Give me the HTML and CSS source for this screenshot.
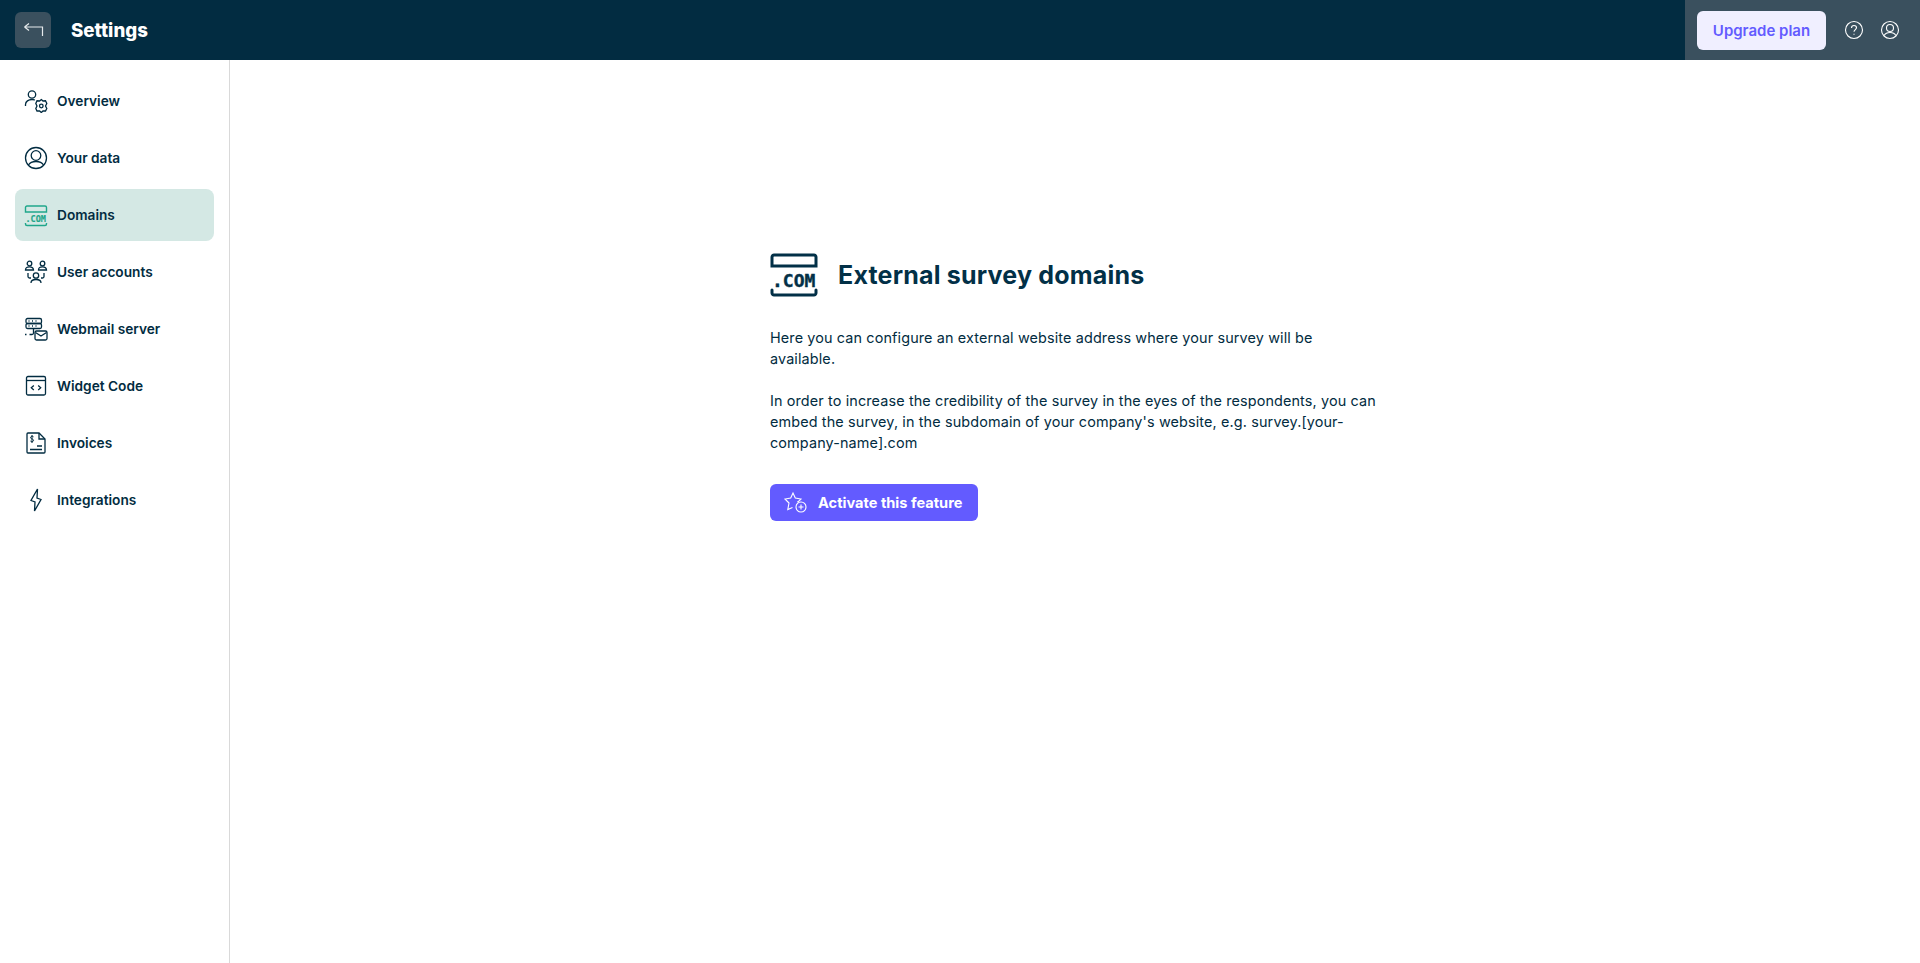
FILE: index.html
```html
<!DOCTYPE html>
<html lang="en">
<head>
<meta charset="utf-8">
<title>Settings</title>
<link rel="stylesheet" href="styles.css">
</head>
<body>
<header class="topbar">
  <div class="topbar-left">
    <button class="back-btn" aria-label="Back">
      <svg width="24" height="24" viewBox="0 0 24 24" fill="none" stroke="#e6eaec" stroke-width="1.2"><path d="M3.500 9H21.500V18M3.500 9L8 5.500M3.500 9L8 12.500"/></svg>
    </button>
    <span class="page-title">Settings</span>
  </div>
  <div class="topbar-right">
    <button class="upgrade-btn">Upgrade plan</button>
    <svg class="top-icon" width="20" height="20" viewBox="0 0 20 20" fill="none" stroke="#fff" stroke-width="1.100"><circle cx="10" cy="10" r="8.500"/><path d="M7.500 8C7.500 6.500 8.700 5.500 10 5.500C11.500 5.500 12.500 6.500 12.500 7.800C12.500 9.500 10 9.700 10 11.800"/><path d="M10 13.800V14.800"/></svg>
    <svg class="top-icon" width="20" height="20" viewBox="0 0 20 20" fill="none" stroke="#fff" stroke-width="1.100"><circle cx="10" cy="10" r="8.500"/><circle cx="10" cy="8" r="3.500"/><path d="M4.200 15.500C5.500 13 7.500 12.500 10 12.500C12.500 12.500 14.500 13 15.800 15.500"/></svg>
  </div>
</header>
<div class="shell">
  <nav class="sidebar">
    <a class="nav-item">
      <svg class="nav-icon" viewBox="0 0 24 24" fill="none" stroke="#022c41" stroke-width="1.300"><circle cx="8" cy="5.500" r="3.700"/><path d="M1.500 17V15.500C1.500 12.500 4.500 10.500 8 10.500C9 10.500 10 10.700 11 11"/><path d="M17.300 10.500L19 12L21.500 11.800L22.800 14.500L21.500 17L22.800 19.500L21.500 22L19 22L17.300 23.500L15.600 22L13 22L11.800 19.500L13 17L11.800 14.500L13 11.800L15.600 12Z"/><circle cx="17.300" cy="17" r="1.800"/></svg>
      <span>Overview</span>
    </a>
    <a class="nav-item">
      <svg class="nav-icon" viewBox="0 0 24 24" fill="none" stroke="#022c41" stroke-width="1.300"><circle cx="12" cy="12" r="10.500"/><circle cx="12" cy="9.500" r="4.800"/><path d="M4.500 19C6 16.300 8.500 15.500 12 15.500C15.500 15.500 18 16.300 19.500 19"/></svg>
      <span>Your data</span>
    </a>
    <a class="nav-item is-active">
      <svg class="nav-icon" viewBox="0 0 24 24" fill="none" stroke="#1fa68a" stroke-width="1.400"><path d="M1.500 9V4.500C1.500 3.700 2.200 3 3 3H21C21.800 3 22.500 3.700 22.500 4.500V9H1.500Z"/><path d="M1.500 20V21C1.500 21.800 2.200 22.500 3 22.500H21C21.800 22.500 22.500 21.800 22.500 21V20"/><text class="com-mark com-mark-small" x="1.500" y="18.500">.COM</text></svg>
      <span>Domains</span>
    </a>
    <a class="nav-item">
      <svg class="nav-icon" viewBox="0 0 24 24" fill="none" stroke="#022c41" stroke-width="1.300"><circle cx="5.500" cy="3.500" r="2.300"/><circle cx="18.500" cy="3.500" r="2.300"/><path d="M1.500 10C1.500 7.500 3 6.800 5.500 6.800C8 6.800 9.500 7.500 9.500 10H1.500Z"/><path d="M14.500 10C14.500 7.500 16 6.800 18.500 6.800C21 6.800 22.500 7.500 22.500 10H14.500Z"/><circle cx="12" cy="15.500" r="2.700"/><path d="M7 23C7 20.500 9 19.500 12 19.500C15 19.500 17 20.500 17 23"/><path d="M4 13V16.500C4 17.300 4.700 18 5.500 18H7M20 13V16.500C20 17.300 19.300 18 18.500 18H17"/></svg>
      <span>User accounts</span>
    </a>
    <a class="nav-item">
      <svg class="nav-icon" viewBox="0 0 24 24" fill="none" stroke="#022c41" stroke-width="1.300"><rect x="2" y="1.500" width="15.500" height="5" rx="1.500"/><rect x="2" y="6.500" width="15.500" height="5" rx="1.500"/><path d="M4.500 4H5.500M8 4H9M11.500 4H12.500M4.500 9H5.500M8 9H9M11.500 9H12.500"/><path d="M1 17.500H2.500M5.500 17.500H8C9 17.500 9.500 17 9.500 16V11.500"/><rect x="11" y="14" width="12" height="9" rx="1.500"/><path d="M11.500 15.500L17 19L22.500 15.500"/></svg>
      <span>Webmail server</span>
    </a>
    <a class="nav-item">
      <svg class="nav-icon" viewBox="0 0 24 24" fill="none" stroke="#022c41" stroke-width="1.300"><rect x="2.500" y="2.500" width="19" height="18.500" rx="1.500"/><path d="M2.500 6.500H21.500"/><path d="M9.800 11.500L7.300 13.800L9.800 16M14.200 11.500L16.700 13.800L14.200 16"/></svg>
      <span>Widget Code</span>
    </a>
    <a class="nav-item">
      <svg class="nav-icon" viewBox="0 0 24 24" fill="none" stroke="#022c41" stroke-width="1.300"><path d="M3 3C3 2.400 3.400 2 4 2H15L21 8V21C21 21.600 20.600 22 20 22H4C3.400 22 3 21.600 3 21Z"/><path d="M15 2V8H21"/><path d="M13 15H18M6 18.500H18"/><path d="M9.500 5.800C9 5 7.200 5 6.700 6C6.200 7.200 7.200 7.700 8 7.900C9 8.200 9.800 8.700 9.400 9.900C9 11 7 11 6.400 10M8 4V12" stroke-width="1"/></svg>
      <span>Invoices</span>
    </a>
    <a class="nav-item">
      <svg class="nav-icon" viewBox="0 0 24 24" fill="none" stroke="#022c41" stroke-width="1.300"><path d="M13.500 1L7 12.500L11 14L10.500 23L17 11.500L13 10Z"/></svg>
      <span>Integrations</span>
    </a>
  </nav>
  <main class="content">
    <section class="panel">
      <div class="panel-head">
        <svg class="panel-icon" viewBox="0 0 48 44" fill="none" stroke="#023047" stroke-width="3" stroke-linecap="round"><path d="M2 13V4C2 3 3 2 4 2H44C45 2 46 3 46 4V13H2Z"/><path d="M2 37V40C2 41 3 42 4 42H44C45 42 46 41 46 40V37"/><text class="com-mark" x="2" y="34">.COM</text></svg>
        <h1 class="panel-title">External survey domains</h1>
      </div>
      <p class="panel-text">Here you can configure an external website address where your survey will be<br>available.</p>
      <p class="panel-text">In order to increase the credibility of the survey in the eyes of the respondents, you can<br>embed the survey, in the subdomain of your company's website, e.g. survey.[your-<br>company-name].com</p>
      <button class="activate-btn">
        <svg class="activate-icon" width="24" height="24" viewBox="0 0 24 24" fill="none" stroke="#fff" stroke-width="1.100"><path d="M14.500 10.300L15 11L18 8L12.300 7L10 2L7.700 7L2 8L6 12L4.800 18.500L9.500 16.500"/><circle cx="18" cy="16" r="5"/><path d="M18 13.500V18.500M15.500 16H20.500"/></svg>
        <span>Activate this feature</span>
      </button>
    </section>
  </main>
</div>
</body>
</html>
```
FILE: styles.css
```css
* { box-sizing: border-box; }
html, body { height: 100%; }
body {
  margin: 0;
  font-family: Inter, "Open Sans", "Liberation Sans", sans-serif;
  color: #022c41;
  background: #fff;
  display: flex;
  flex-direction: column;
  overflow: hidden;
}
button { font-family: inherit; border: 0; cursor: pointer; }
.topbar {
  height: 60px;
  flex: none;
  display: flex;
  justify-content: space-between;
  background: #022c41;
}
.topbar-left {
  display: flex;
  align-items: center;
  padding-left: 15px;
  gap: 20px;
}
.back-btn {
  width: 36px;
  height: 36px;
  padding: 0;
  border-radius: 6px;
  background: #3a505e;
  display: flex;
  align-items: center;
  justify-content: center;
}
.page-title { color: #fff; font-size: 18.700px; font-weight: 800; }
.topbar-right {
  width: 235px;
  background: #3a505e;
  display: flex;
  align-items: center;
  padding-left: 12px;
}
.upgrade-btn {
  width: 129px;
  height: 39px;
  padding: 0;
  margin-right: 18px;
  border-radius: 6px;
  background: #f0efff;
  color: #635bff;
  font-size: 15px;
  font-weight: 600;
}
.top-icon { margin-right: 16px; flex: none; }
.shell { flex: 1; display: flex; min-height: 0; }
.sidebar {
  width: 230px;
  flex: none;
  border-right: 1px solid #d9d9d9;
  padding: 15px 15px 0;
  display: flex;
  flex-direction: column;
  gap: 5px;
}
.nav-item {
  height: 52px;
  display: flex;
  align-items: center;
  gap: 9px;
  padding-left: 9px;
  padding-bottom: 1px;
  border-radius: 8px;
  font-size: 13.700px;
  font-weight: 600;
  color: #022c41;
}
.nav-item.is-active { background: #d4e8e4; }
.nav-icon { width: 24px; height: 24px; flex: none; }
.com-mark {
  font-family: "DejaVu Sans Mono", monospace;
  font-weight: 700;
  font-size: 18px;
  fill: #023047;
  stroke: #023047;
  stroke-width: 0.4px;
}
.com-mark-small { font-size: 8.500px; fill: #1fa68a; stroke: #1fa68a; stroke-width: 0.15px; }
.content { flex: 1; padding: 192px 0 0 540px; }
.panel { width: 610px; }
.panel-head { display: flex; align-items: center; gap: 20px; margin-bottom: 29px; }
.panel-icon { width: 48px; height: 44px; flex: none; }
.panel-title { margin: 0; font-size: 25px; font-weight: 700; line-height: 46px; color: #023047; letter-spacing: 0.2px; }
.panel-text {
  margin: 0 0 21px;
  font-size: 14.400px;
  line-height: 21px;
  white-space: nowrap;
  letter-spacing: 0.13px;
}
.activate-btn {
  width: 208px;
  height: 37px;
  margin-top: 31px;
  padding: 0 0 0 13px;
  display: flex;
  align-items: center;
  gap: 11px;
  border-radius: 6px;
  background: #635bff;
  color: #fff;
  font-size: 14.600px;
  font-weight: 700;
}
.activate-icon { flex: none; }
```
